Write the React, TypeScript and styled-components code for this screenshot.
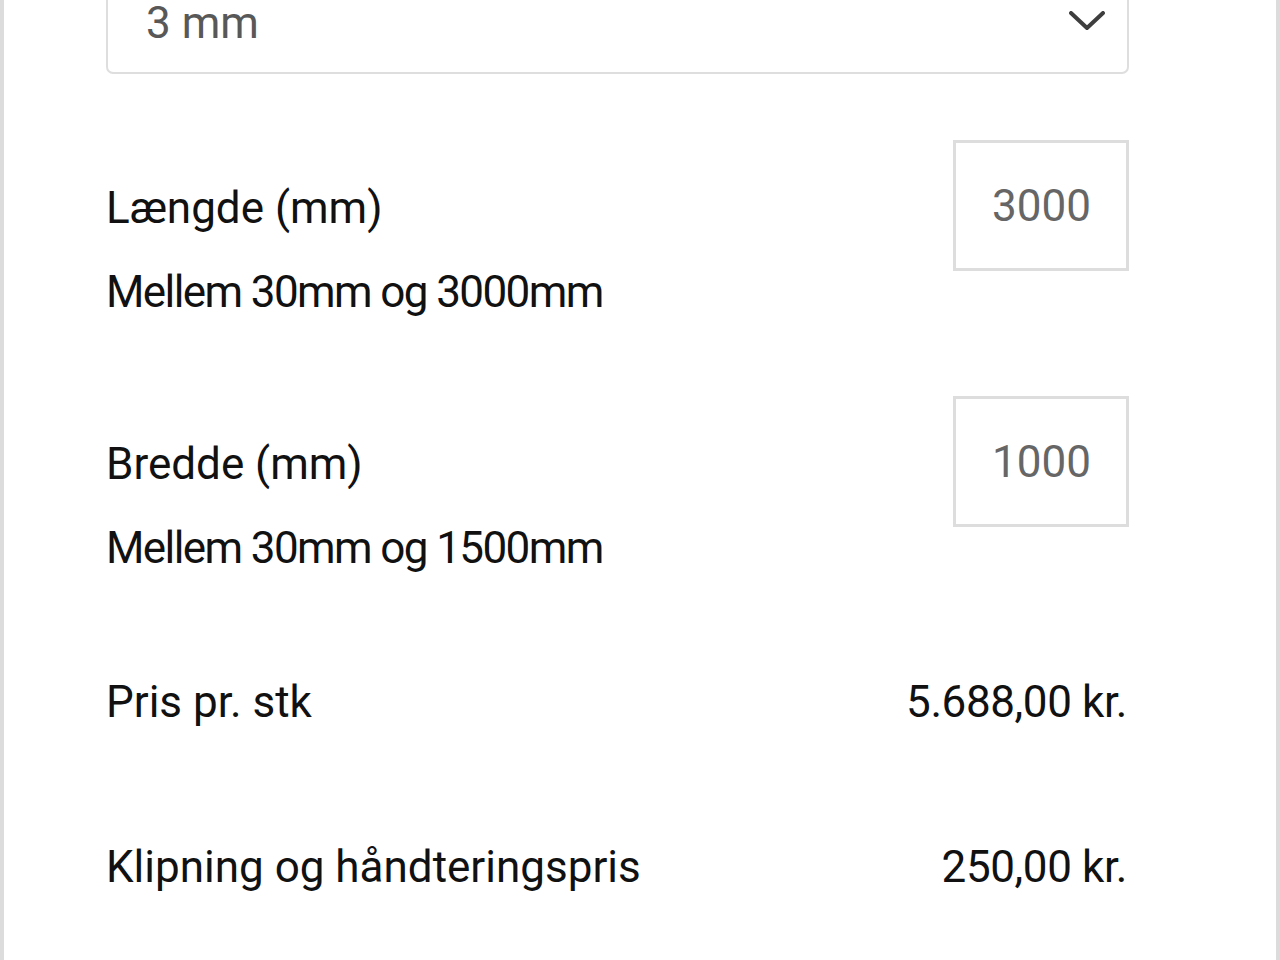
import styled, { createGlobalStyle } from "styled-components";

const Global = createGlobalStyle`
  html, body {
    margin: 0;
    padding: 0;
    background: #ffffff;
    overflow: hidden;
  }
  * {
    box-sizing: border-box;
  }
`;

export default function App() {
  return (
    <>
      <Global />
      <Page>
        <Panel>
          <Select>
            <SelectValue>3 mm</SelectValue>
            <Chevron viewBox="0 0 36 20" aria-hidden>
              <path d="M2 2 L18 17 L34 2" />
            </Chevron>
          </Select>

          <Field>
            <FieldText>
              <Label>Længde (mm)</Label>
              <Hint>Mellem 30mm og 3000mm</Hint>
            </FieldText>
            <NumberInput defaultValue="3000" />
          </Field>

          <Field>
            <FieldText>
              <Label>Bredde (mm)</Label>
              <Hint>Mellem 30mm og 1500mm</Hint>
            </FieldText>
            <NumberInput defaultValue="1000" />
          </Field>

          <PriceList>
            <PriceRow>
              <Label>Pris pr. stk</Label>
              <Amount>5.688,00 kr.</Amount>
            </PriceRow>
            <PriceRow>
              <Label>Klipning og håndteringspris</Label>
              <Amount>250,00 kr.</Amount>
            </PriceRow>
          </PriceList>
        </Panel>
      </Page>
    </>
  );
}

const Page = styled.div`
  display: flow-root;
  height: 960px;
  overflow: hidden;
  background: #ffffff;
  border-left: 4px solid #dcdcdc;
  border-right: 4px solid #dcdcdc;
  font-family: Roboto, "Liberation Sans", sans-serif;
  color: #111111;
`;

const Panel = styled.div`
  padding: 0 147px 0 102px;
`;

const Select = styled.div`
  margin-top: -30px;
  height: 104px;
  border: 2px solid #dedede;
  border-radius: 7px;
  display: flex;
  align-items: flex-end;
  justify-content: space-between;
  padding: 0 22px 22px 38px;
`;

const SelectValue = styled.span`
  font-size: 44px;
  line-height: 1.2;
  color: #585858;
`;

const Chevron = styled.svg`
  width: 36px;
  height: 20px;
  margin-bottom: 19px;
  fill: none;
  stroke: #3e3e3e;
  stroke-width: 4;
  stroke-linecap: round;
  stroke-linejoin: round;
`;

const Field = styled.div`
  display: flex;
  justify-content: space-between;
  align-items: flex-start;
  margin-top: 66px;

  & + & {
    margin-top: 76px;
  }
`;

const FieldText = styled.div`
  display: flex;
  flex-direction: column;
  padding-top: 41px;
`;

const Label = styled.span`
  font-size: 44px;
  line-height: 55px;
  color: #111111;
`;

const Hint = styled(Label)`
  margin-top: 29px;
  letter-spacing: -1.6px;
`;

const NumberInput = styled.input`
  width: 176px;
  height: 131px;
  border: 3px solid #dddddd;
  border-radius: 0;
  padding: 0 0 0 36px;
  font-family: Roboto, "Liberation Sans", sans-serif;
  font-size: 44px;
  color: #666666;
  background: #ffffff;
  outline: none;
`;

const PriceList = styled.div`
  margin-top: 44px;
`;

const PriceRow = styled.div`
  height: 165px;
  display: flex;
  align-items: center;
  justify-content: space-between;
`;

const Amount = styled(Label)`
  padding-right: 2px;
  letter-spacing: -0.4px;
`;
